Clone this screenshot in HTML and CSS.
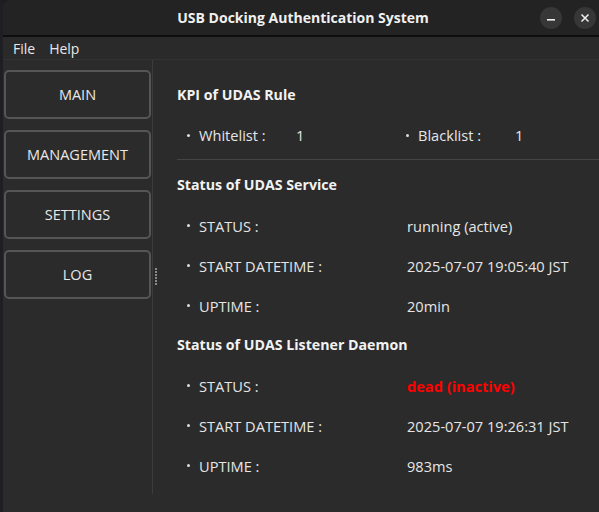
FILE: index.html
```html
<!DOCTYPE html>
<html>
<head>
<meta charset="utf-8">
<link rel="stylesheet" href="styles.css">
</head>
<body>
<div class="screen">
  <div class="edge"></div>
  <div class="window">
    <div class="titlebar">
      <div class="title">USB Docking Authentication System</div>
      <div class="wbtns">
        <span class="wbtn"><svg width="10" height="10" viewBox="0 0 10 10"><rect x="1" y="6" width="8" height="1.6" fill="#eee"/></svg></span>
        <span class="wbtn"><svg width="10" height="10" viewBox="0 0 10 10"><path d="M1.5 1.5 L8.5 8.5 M8.5 1.5 L1.5 8.5" stroke="#eee" stroke-width="1.5"/></svg></span>
      </div>
    </div>
    <div class="menubar">
      <span class="menu">File</span>
      <span class="menu">Help</span>
    </div>
    <div class="body">
      <div class="side">
        <div class="navbtn">MAIN</div>
        <div class="navbtn">MANAGEMENT</div>
        <div class="navbtn">SETTINGS</div>
        <div class="navbtn">LOG</div>
      </div>
      <div class="splitter"><span class="grip"></span></div>
      <div class="content">
        <div class="heading">KPI of UDAS Rule</div>
        <div class="kpirow">
          <div class="kpi"><span class="dot"></span><span class="klabel">Whitelist :</span><span>1</span></div>
          <div class="kpi"><span class="dot"></span><span class="klabel">Blacklist :</span><span>1</span></div>
        </div>
        <div class="hr"></div>
        <div class="heading">Status of UDAS Service</div>
        <div class="row"><span class="dot"></span><span class="label">STATUS :</span><span>running (active)</span></div>
        <div class="row"><span class="dot"></span><span class="label">START DATETIME :</span><span>2025-07-07 19:05:40 JST</span></div>
        <div class="row"><span class="dot"></span><span class="label">UPTIME :</span><span>20min</span></div>
        <div class="heading h3">Status of UDAS Listener Daemon</div>
        <div class="row"><span class="dot"></span><span class="label">STATUS :</span><span class="dead">dead (inactive)</span></div>
        <div class="row"><span class="dot"></span><span class="label">START DATETIME :</span><span>2025-07-07 19:26:31 JST</span></div>
        <div class="row"><span class="dot"></span><span class="label">UPTIME :</span><span>983ms</span></div>
      </div>
    </div>
  </div>
</div>
</body>
</html>
```
FILE: styles.css
```css
* { box-sizing: border-box; }
html, body { margin: 0; padding: 0; background: #1c1c1e; }
body { font-family: "Open Sans", "Noto Sans", sans-serif; font-size: 14px; color: #e6e6e6; }
.screen { width: 599px; height: 512px; display: flex; overflow: hidden; }
.edge { width: 3px; background: #1e1f23; flex: none; }
.window { flex: 1; display: flex; flex-direction: column; background: #2b2b2b; border-top-left-radius: 8px; overflow: hidden; }
.titlebar { height: 37px; flex: none; background: #232323; border-bottom: 2px solid #0e0e0e; position: relative; display: flex; align-items: center; justify-content: center; }
.title { font-weight: 700; font-size: 14px; color: #f0f0f0; margin-left: 4px; margin-top: -1px; }
.wbtns { position: absolute; right: 3px; top: 7px; display: flex; gap: 12px; }
.wbtn { width: 22px; height: 22px; border-radius: 50%; background: #373737; display: flex; align-items: center; justify-content: center; }
.menubar { height: 23px; flex: none; background: #2a2a2a; border-bottom: 1px solid #333; display: flex; align-items: center; padding-left: 10px; gap: 14px; font-size: 14px; color: #e8e8e8; }
.body { flex: 1; display: flex; min-height: 0; }
.side { width: 150px; flex: none; display: flex; flex-direction: column; gap: 11px; padding: 10px 1px 0 1px; border-right: 1px solid #3c3c3c; margin-bottom: 18px; }
.navbtn { height: 49px; border: 2px solid #555; border-radius: 5px; display: flex; align-items: center; justify-content: center; font-size: 14.5px; color: #e8e8e8; }
.splitter { width: 5px; flex: none; display: flex; align-items: flex-start; justify-content: center; padding-top: 208px; }
.grip { width: 2px; height: 17px; background: repeating-linear-gradient(#8a8a8a 0 2px, transparent 2px 3px); }
.content { flex: 1; padding: 19px 0 0 19px; display: flex; flex-direction: column; font-size: 14.6px; }
.heading { height: 30px; display: flex; align-items: center; font-weight: 700; font-size: 14.2px; color: #f2f2f2; margin-bottom: 5px; }
.h3 { margin-top: 5px; }
.kpirow { display: flex; height: 40px; padding-top: 2px; }
.kpi { width: 219px; display: flex; align-items: center; padding-left: 10px; }
.klabel { width: 97px; }
.dot { width: 3px; height: 3px; border-radius: 50%; background: #ddd; margin-right: 9px; flex: none; }
.hr { height: 1px; background: #444; margin: 5px 0 9px 0; }
.row { height: 40px; display: flex; align-items: center; padding-left: 10px; padding-top: 3px; }
.label { width: 208px; }
.dead { color: #ff0000; font-weight: 700; }
```
